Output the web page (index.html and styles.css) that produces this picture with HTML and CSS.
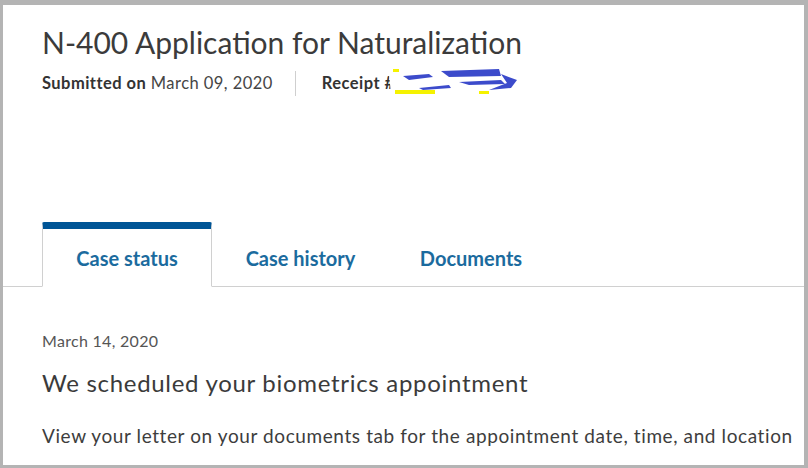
FILE: index.html
```html
<!DOCTYPE html>
<html>
<head>
<meta charset="utf-8">
<link rel="stylesheet" href="styles.css">
</head>
<body>
<div class="frame">
  <header class="case-header">
    <h1 class="title">N-400 Application for Naturalization</h1>
    <div class="meta">
      <span class="meta-item"><b>Submitted on</b>&nbsp;March 09, 2020</span>
      <span class="sep"></span>
      <span class="meta-item"><b>Receipt #</b><svg class="redact" width="130" height="32" viewBox="0 0 130 32">
        <polygon points="0,8 20,5 60,6 100,4 122,6 126,12 118,18 128,22 110,27 70,25 30,28 2,28" fill="#ffffff"/>
        <rect x="6" y="24" width="40" height="4" fill="#f5f200"/>
        <rect x="90" y="25" width="10" height="3" fill="#f5f200"/>
        <rect x="4" y="3" width="6" height="3" fill="#f5f200"/>
        <polygon points="14,10 40,8 44,11 20,14" fill="#3c4bcb"/>
        <polygon points="52,5 110,3 112,10 60,11" fill="#3c4bcb"/>
        <polygon points="70,16 112,14 116,18 80,19" fill="#3c4bcb"/>
        <polygon points="112,8 128,14 122,22 100,24 118,17" fill="#3c4bcb"/>
        <polygon points="30,22 60,19 62,22 34,24" fill="#3c4bcb"/>
      </svg></span>
    </div>
  </header>
  <nav class="tabs">
    <a class="tab active">Case status</a>
    <a class="tab">Case history</a>
    <a class="tab">Documents</a>
    <span class="tab-fill"></span>
  </nav>
  <section class="status">
    <div class="date">March 14, 2020</div>
    <h2 class="status-title">We scheduled your biometrics appointment</h2>
    <p class="status-body">View your letter on your documents tab for the appointment date, time, and location</p>
  </section>
</div>
</body>
</html>
```
FILE: styles.css
```css
html, body {
  margin: 0;
  padding: 0;
  background: #b4b4b4;
}
body {
  font-family: "Lato", "Liberation Sans", sans-serif;
  color: #3d3d3d;
}
.frame {
  box-sizing: border-box;
  width: 808px;
  height: 468px;
  border-style: solid;
  border-color: #b4b4b4;
  border-width: 5px 4px 3px 3px;
  background: #ffffff;
  overflow: hidden;
  display: flex;
  flex-direction: column;
}
.case-header {
  padding: 20px 0 0 39px;
  height: 217px;
  flex: none;
  box-sizing: border-box;
}
.title {
  margin: 0;
  font-size: 30px;
  font-weight: 400;
  line-height: 34px;
  color: #3b3b3b;
}
.meta {
  display: flex;
  align-items: center;
  margin-top: 11px;
  font-size: 16.5px;
  letter-spacing: 0.45px;
  color: #454545;
  height: 26px;
}
.meta b {
  font-weight: 700;
  color: #333;
}
.sep {
  width: 1px;
  height: 25px;
  background: #cfcfcf;
  margin: 0 26px 0 22px;
}
.meta-item {
  display: flex;
  align-items: center;
  white-space: nowrap;
}
.redact {
  margin-left: -6px;
  margin-top: -2px;
}
.tabs {
  display: flex;
  align-items: stretch;
  height: 65px;
  flex: none;
}
.tabs::before {
  content: "";
  width: 39px;
  border-bottom: 1px solid #d0d0d0;
}
.tab {
  display: flex;
  align-items: center;
  justify-content: center;
  font-size: 20px;
  font-weight: 700;
  color: #1b6b9e;
  border-bottom: 1px solid #d0d0d0;
  padding-top: 7px;
  box-sizing: border-box;
}
.tab.active {
  width: 170px;
  border-top: 7px solid #005596;
  border-left: 1px solid #d0d0d0;
  border-right: 1px solid #d0d0d0;
  border-bottom: 1px solid transparent;
  border-radius: 2px 2px 0 0;
  padding-top: 0;
}
.tab:nth-child(2) {
  width: 177px;
}
.tab:nth-child(3) {
  width: 164px;
}
.tab-fill {
  flex: 1;
  border-bottom: 1px solid #d0d0d0;
}
.status {
  padding: 44px 0 0 39px;
}
.date {
  font-size: 16px;
  letter-spacing: 0.3px;
  color: #555;
  line-height: 20px;
}
.status-title {
  margin: 18px 0 0;
  font-size: 24px;
  letter-spacing: 0.7px;
  font-weight: 400;
  line-height: 28px;
  color: #3b3b3b;
}
.status-body {
  margin: 27px 0 0;
  font-size: 19px;
  letter-spacing: 0.6px;
  line-height: 24px;
  color: #3d3d3d;
  white-space: nowrap;
}
```
